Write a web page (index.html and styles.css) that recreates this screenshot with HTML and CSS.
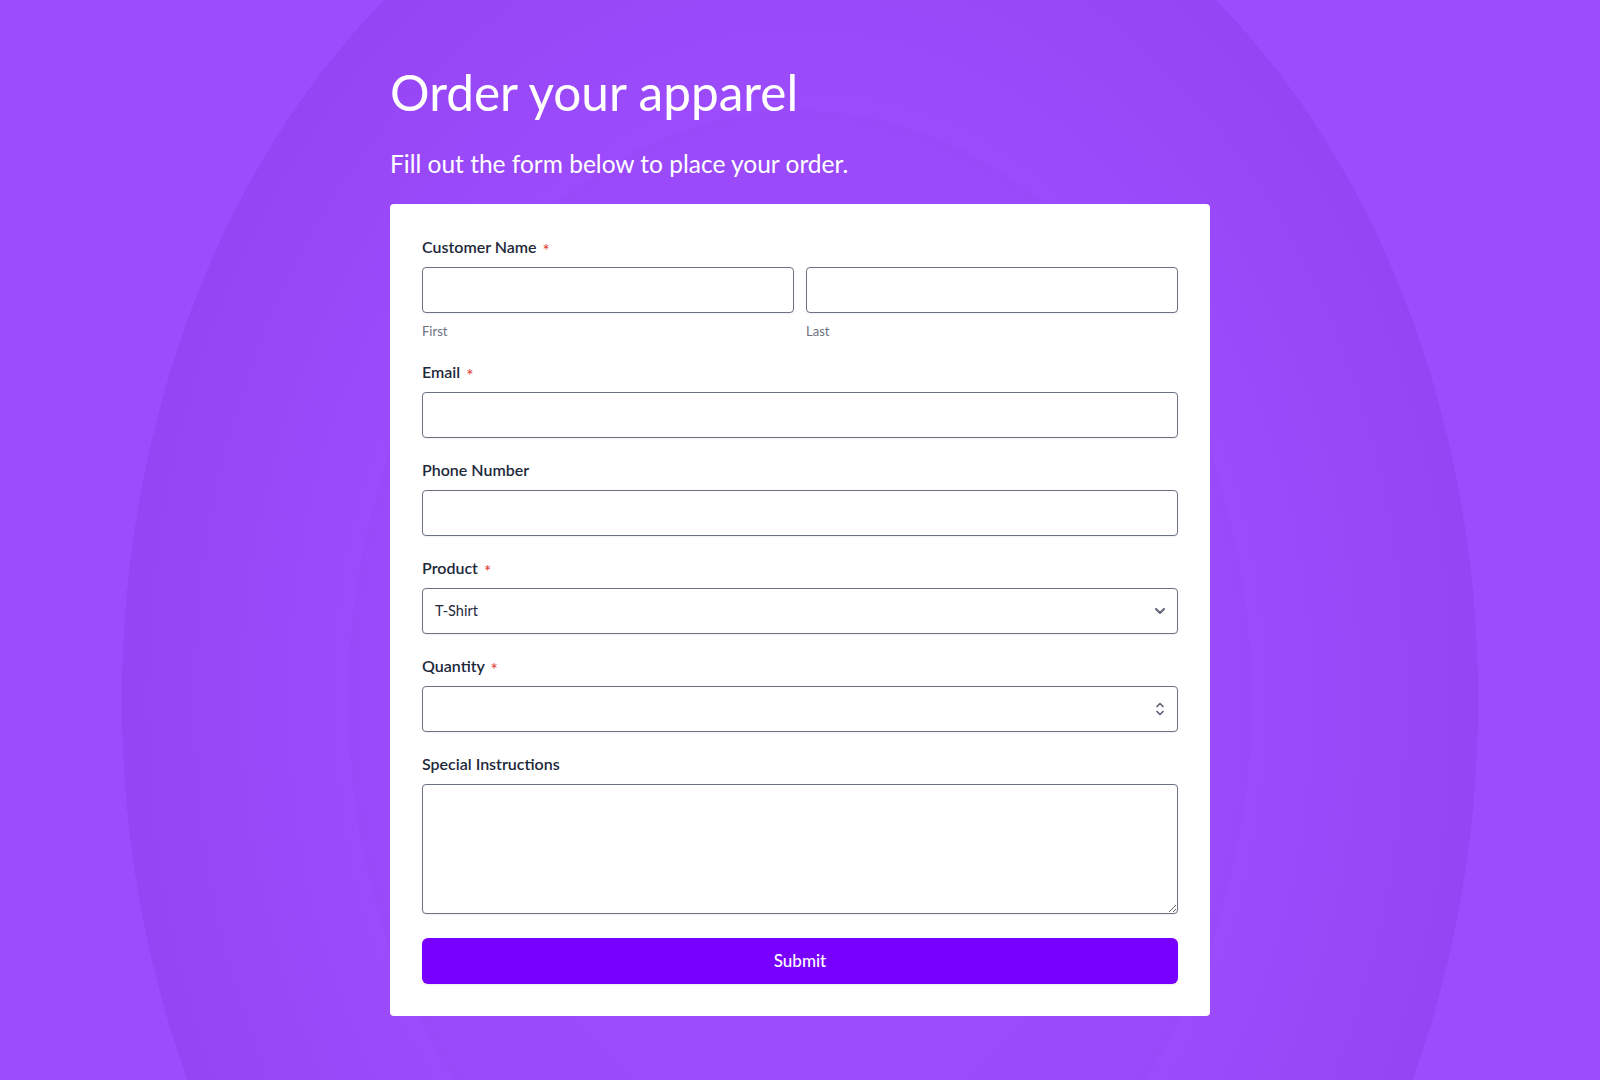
FILE: index.html
```html
<!DOCTYPE html>
<html lang="en">
<head>
<meta charset="utf-8">
<title>Order your apparel</title>
<link rel="stylesheet" href="styles.css">
</head>
<body>
<main class="page">
  <h1 class="title">Order your apparel</h1>
  <p class="subtitle">Fill out the form below to place your order.</p>
  <form class="card">
    <div class="field">
      <label class="label">Customer Name <span class="req">*</span></label>
      <div class="name-row">
        <div class="name-col">
          <input class="control" type="text">
          <span class="hint">First</span>
        </div>
        <div class="name-col">
          <input class="control" type="text">
          <span class="hint">Last</span>
        </div>
      </div>
    </div>
    <div class="field">
      <label class="label">Email <span class="req">*</span></label>
      <input class="control" type="email">
    </div>
    <div class="field">
      <label class="label">Phone Number</label>
      <input class="control" type="tel">
    </div>
    <div class="field">
      <label class="label">Product <span class="req">*</span></label>
      <div class="control-wrap">
        <select class="control select">
          <option>T-Shirt</option>
          <option>Hoodie</option>
          <option>Cap</option>
        </select>
        <svg class="ctl-icon chevron" width="10" height="6" viewBox="0 0 10 6" aria-hidden="true"><path d="M1 1l4 4 4-4" fill="none" stroke="#5f6675" stroke-width="2" stroke-linecap="round" stroke-linejoin="round"/></svg>
      </div>
    </div>
    <div class="field">
      <label class="label">Quantity <span class="req">*</span></label>
      <div class="control-wrap">
        <input class="control number" type="number">
        <svg class="ctl-icon spinner" width="8" height="14" viewBox="0 0 8 14" aria-hidden="true"><path d="M1 4.5l3-3 3 3M1 9.5l3 3 3-3" fill="none" stroke="#5f6675" stroke-width="1.7" stroke-linecap="round" stroke-linejoin="round"/></svg>
      </div>
    </div>
    <div class="field field-last">
      <label class="label">Special Instructions</label>
      <textarea class="control textarea"></textarea>
    </div>
    <button class="submit" type="button">Submit</button>
  </form>
</main>
</body>
</html>
```
FILE: styles.css
```css
html, body {
  margin: 0;
  padding: 0;
}

body {
  min-height: 100vh;
  font-family: Lato, "Noto Sans", "Liberation Sans", sans-serif;
  background-color: #9d4cfd;
  background-image:
    radial-gradient(ellipse 226px 295px at 800px 700px, rgba(148, 67, 242, 0) 40%, rgba(148, 67, 242, 0.3) 100%, rgba(148, 67, 242, 0) 100%),
    radial-gradient(ellipse 452px 590px at 800px 700px, rgba(148, 67, 242, 0) 55%, rgba(148, 67, 242, 0.25) 100%, rgba(148, 67, 242, 0) 100%),
    radial-gradient(ellipse 678px 886px at 800px 700px, rgba(148, 67, 242, 0) 64%, rgba(148, 67, 242, 0.8) 100%, rgba(148, 67, 242, 0) 100%);
}

.page {
  width: 820px;
  margin: 0 auto;
  padding-top: 64px;
  padding-bottom: 40px;
}

.title {
  margin: 0 0 22px;
  font-size: 49.5px;
  line-height: 57.6px;
  font-weight: 400;
  color: #ffffff;
}

.subtitle {
  margin: 0 0 21px;
  font-size: 24.5px;
  line-height: 39px;
  font-weight: 400;
  color: #ffffff;
}

.card {
  background: #ffffff;
  border-radius: 4px;
  padding: 31px 32px 32px;
}

.field {
  margin-bottom: 20px;
}

.field-last {
  margin-bottom: 24px;
}

.label {
  display: block;
  margin-bottom: 8px;
  font-size: 16px;
  line-height: 24px;
  font-weight: 600;
  color: #1e293b;
}

.req {
  margin-left: 2px;
  font-size: 17px;
  font-weight: 400;
  line-height: 0;
  color: #e0352b;
  vertical-align: -4px;
}

.name-row {
  display: grid;
  grid-template-columns: 1fr 1fr;
  gap: 12px;
}

.name-col {
  display: flex;
  flex-direction: column;
}

.hint {
  margin-top: 9px;
  font-size: 13px;
  line-height: 18px;
  color: #6b7280;
}

.control {
  display: block;
  width: 100%;
  height: 46px;
  box-sizing: border-box;
  margin: 0;
  padding: 0 12px;
  border: 1px solid #6b7280;
  border-radius: 4px;
  background: #ffffff;
  box-shadow: 0 1px 2px rgba(0, 0, 0, 0.06);
  font-family: Lato, "Noto Sans", "Liberation Sans", sans-serif;
  font-size: 14.5px;
  color: #1e293b;
  outline: none;
}

.control-wrap {
  position: relative;
}

.select {
  -webkit-appearance: none;
  appearance: none;
  padding-right: 36px;
}

.number {
  -moz-appearance: textfield;
}

.number::-webkit-inner-spin-button,
.number::-webkit-outer-spin-button {
  -webkit-appearance: none;
  margin: 0;
}

.ctl-icon {
  position: absolute;
  top: 50%;
  pointer-events: none;
}

.chevron {
  right: 13px;
  transform: translateY(-50%);
}

.spinner {
  right: 14px;
  transform: translateY(-50%);
}

.textarea {
  height: 130px;
  padding: 10px 12px;
  resize: vertical;
}

.submit {
  display: block;
  width: 100%;
  height: 46px;
  border: 0;
  border-radius: 6px;
  background: #7700ff;
  box-shadow: 0 1px 2px rgba(0, 0, 0, 0.08);
  font-family: Lato, "Noto Sans", "Liberation Sans", sans-serif;
  font-size: 17px;
  font-weight: 500;
  color: #ffffff;
  cursor: pointer;
}
```
